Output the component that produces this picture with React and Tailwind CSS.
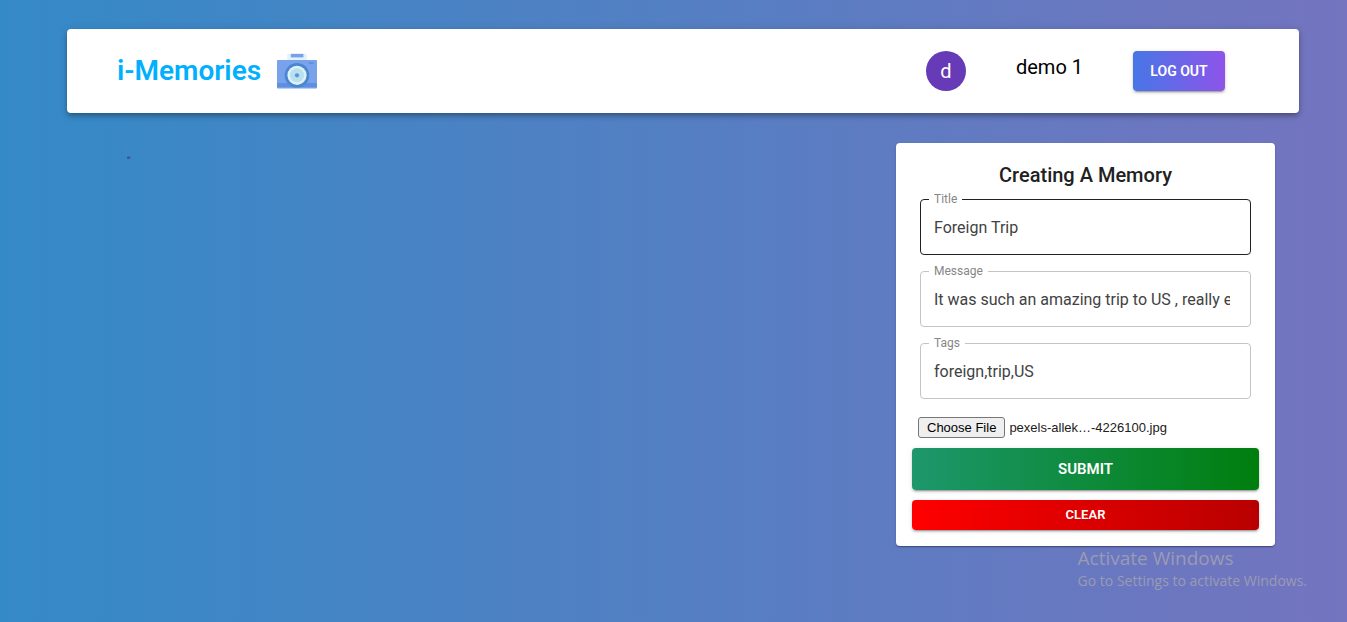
import { useState } from "react";

function CameraLogo() {
  return (
    <svg viewBox="0 0 40 40" className="size-10" aria-hidden="true">
      <path d="M10.200 9.200V4.200q0-1.800 1.800-1.800h16q1.800 0 1.800 1.800v5z" fill="#e1f3fa" />
      <rect x="13.800" y="2.900" width="12.600" height="3.500" fill="#78a0ea" />
      <rect x="0" y="9" width="40" height="28" rx=".8" fill="#78a2ea" />
      <path d="M0 32h40v5H0z" fill="#5f90e0" />
      <path d="M0 36.800h40q0 1.200-1.200 1.200H1.200Q0 38 0 36.800z" fill="#b9d0f3" />
      <rect x="31.400" y="11.200" width="5.400" height="1.500" rx=".7" fill="#5d8ddf" />
      <circle cx="20" cy="24.300" r="12.300" fill="#4a86d0" />
      <circle cx="20" cy="24.300" r="9.600" fill="#dcf2f8" />
      <circle cx="20" cy="24.300" r="7" fill="#b8e0ee" />
      <circle cx="20" cy="24.300" r="2.100" fill="#5b94d6" />
    </svg>
  );
}

function Spinner() {
  return (
    <svg viewBox="0 0 44 44" className="size-10" role="progressbar" aria-label="Loading memories">
      <path d="M21 3.300 L24.500 2.700" stroke="#3f51b5" strokeWidth="2.600" fill="none" />
    </svg>
  );
}

function Field({ id, label, value, onChange, active }) {
  return (
    <div className="relative">
      <label htmlFor={id} className="absolute -top-2 left-[9px] bg-white px-[5px] text-xs leading-4 text-[#868686]">
        {label}
      </label>
      <input
        id={id}
        type="text"
        value={value}
        onChange={onChange}
        className={
          active
            ? "h-14 w-full rounded border border-[#212121] bg-white pr-5 pl-[13px] text-base text-[#424242] outline-none"
            : "h-14 w-full rounded border border-[#c4c4c4] bg-white pr-5 pl-[13px] text-base text-[#424242] outline-none focus:border-[#212121]"
        }
      />
    </div>
  );
}

export default function App() {
  const [memory, setMemory] = useState({
    title: "Foreign Trip",
    message: "It was such an amazing trip to US , really enjoyed it",
    tags: "foreign,trip,US",
  });
  const [fileName, setFileName] = useState("pexels-allek…-4226100.jpg");
  const update = (key) => (event) => setMemory({ ...memory, [key]: event.target.value });

  return (
    <div className="relative min-h-screen bg-[linear-gradient(to_right,#348ac7,#7474bf)] pt-[29px] pr-12 pb-8 pl-[67px] font-['Roboto',sans-serif]">
      <header className="flex items-center justify-between rounded bg-white py-[22px] pr-[74px] pl-[50px] shadow-[0_2px_4px_-1px_rgba(0,0,0,0.2),0_4px_5px_0_rgba(0,0,0,0.14),0_1px_10px_0_rgba(0,0,0,0.12)]">
        <a href="#" className="flex items-center gap-4">
          <h1 className="text-[28px] leading-10 font-semibold text-[#00b0ff]">i-Memories</h1>
          <CameraLogo />
        </a>
        <div className="flex gap-[50px]">
          <div className="flex size-10 items-center justify-center rounded-full bg-[#673ab7] text-xl text-white">d</div>
          <p className="text-xl leading-8 text-black">demo 1</p>
          <button
            type="button"
            className="h-10 w-[92px] rounded bg-[linear-gradient(to_right,#4776e6,#8e54e9)] text-sm font-semibold text-white shadow-[0_3px_1px_-2px_rgba(0,0,0,0.2),0_2px_2px_0_rgba(0,0,0,0.14),0_1px_5px_0_rgba(0,0,0,0.12)]"
          >
            LOG OUT
          </button>
        </div>
      </header>

      <main className="mt-[30px] flex items-start justify-between pr-6 pl-[41px]">
        <div className="pt-3">
          <Spinner />
        </div>
        <form
          onSubmit={(event) => event.preventDefault()}
          className="w-[379px] rounded bg-white p-4 shadow-[0_2px_1px_-1px_rgba(0,0,0,0.2),0_1px_1px_0_rgba(0,0,0,0.14),0_1px_3px_0_rgba(0,0,0,0.12)]"
        >
          <h2 className="text-center text-xl leading-8 font-medium text-[#212121]">Creating A Memory</h2>
          <div className="mx-2 mt-2 flex flex-col gap-4">
            <Field id="title" label="Title" value={memory.title} onChange={update("title")} active />
            <Field id="message" label="Message" value={memory.message} onChange={update("message")} />
            <Field id="tags" label="Tags" value={memory.tags} onChange={update("tags")} />
          </div>
          <label className="relative mx-1.5 mt-[18px] mb-2.5 flex items-center gap-1 font-['Liberation_Sans',Arial,sans-serif] text-[13px] text-[#212121]">
            <input
              type="file"
              className="sr-only"
              onChange={(event) => setFileName(event.target.files[0]?.name ?? "No file chosen")}
            />
            <span className="rounded-[3px] border border-[#767676] bg-[#efefef] px-2 leading-[19px] text-black">
              Choose File
            </span>
            <span>{fileName}</span>
          </label>
          <div className="flex flex-col gap-2.5">
            <button
              type="submit"
              className="h-[42px] rounded bg-[linear-gradient(to_right,#1d976c,#007e0d)] text-[15px] font-semibold text-white shadow-[0_3px_1px_-2px_rgba(0,0,0,0.2),0_2px_2px_0_rgba(0,0,0,0.14),0_1px_5px_0_rgba(0,0,0,0.12)]"
            >
              SUBMIT
            </button>
            <button
              type="button"
              onClick={() => setMemory({ title: "", message: "", tags: "" })}
              className="h-[30px] rounded bg-[linear-gradient(to_right,#ff0000,#b80000)] text-[13px] font-semibold text-white shadow-[0_3px_1px_-2px_rgba(0,0,0,0.2),0_2px_2px_0_rgba(0,0,0,0.14),0_1px_5px_0_rgba(0,0,0,0.12)]"
            >
              CLEAR
            </button>
          </div>
        </form>
      </main>

      <aside className="absolute right-10 bottom-[30px] font-['Open_Sans',sans-serif] text-[#9a9bb3]">
        <p className="text-[19px] leading-6">Activate Windows</p>
        <p className="text-sm leading-[22px]">Go to Settings to activate Windows.</p>
      </aside>
    </div>
  );
}
